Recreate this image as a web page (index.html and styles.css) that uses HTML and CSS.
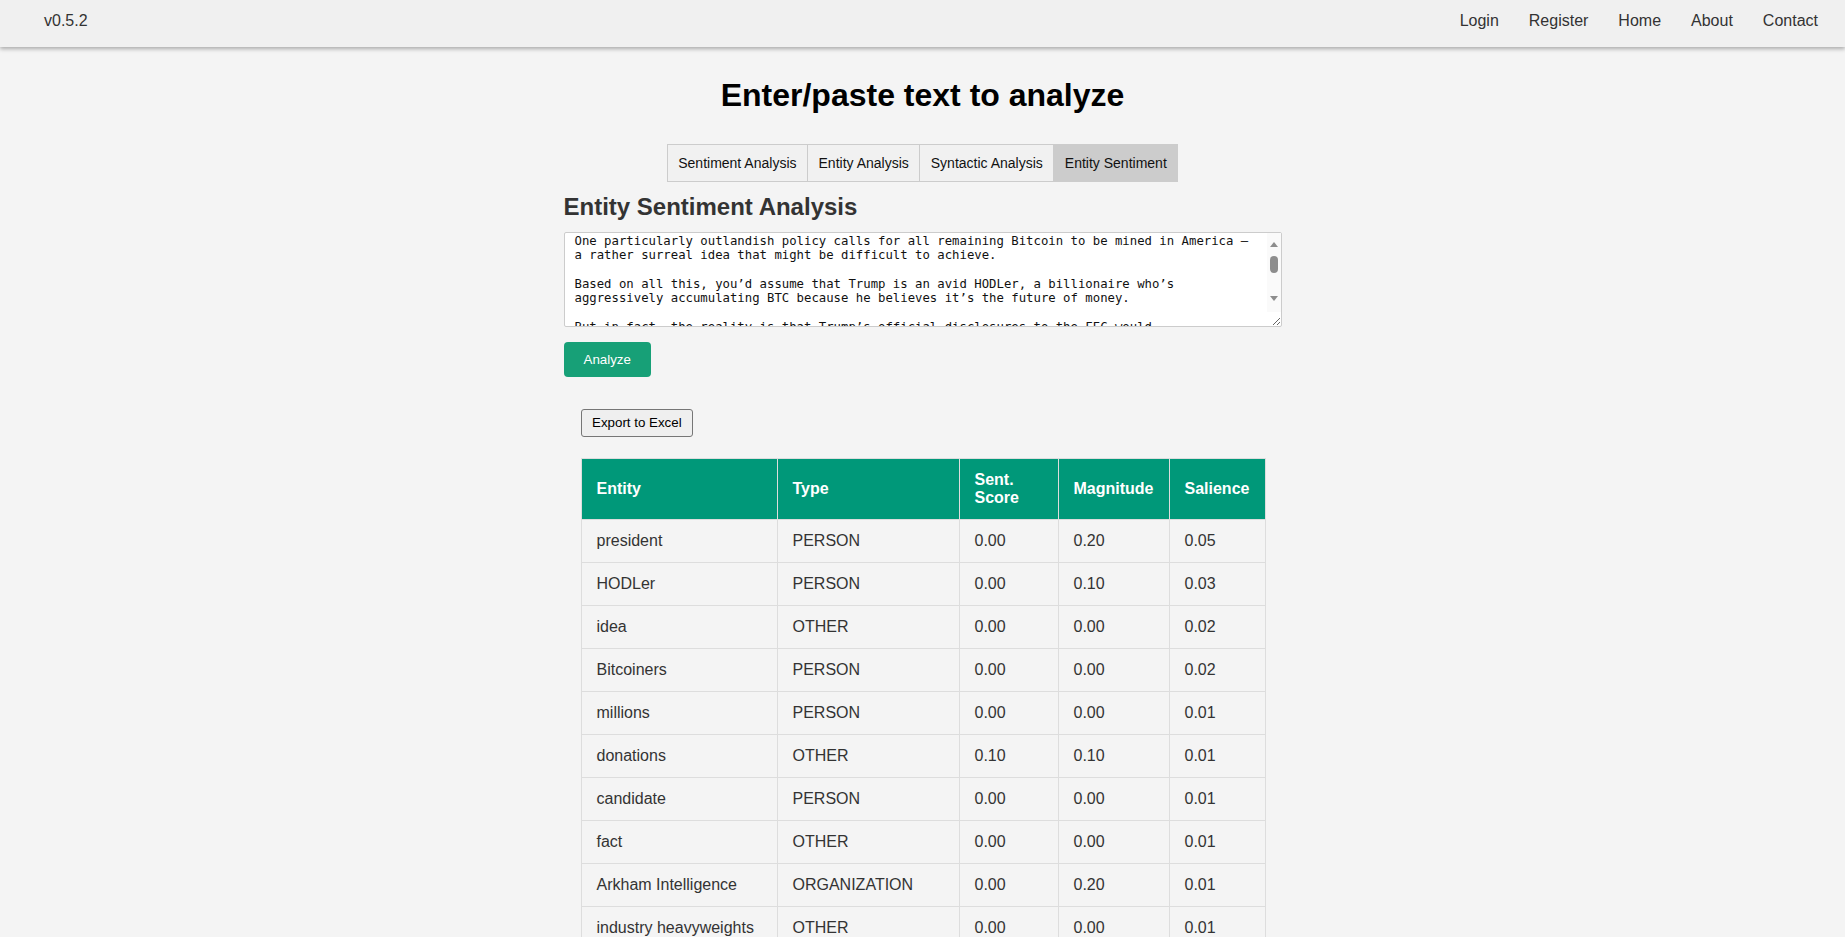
FILE: index.html
```html
<!DOCTYPE html>
<html lang="en">
<head>
<meta charset="utf-8">
<title>Entity Sentiment Analysis</title>
<link rel="stylesheet" href="styles.css">
</head>
<body>
<header class="topbar">
  <span class="version">v0.5.2</span>
  <nav class="nav">
    <a href="#">Login</a>
    <a href="#">Register</a>
    <a href="#">Home</a>
    <a href="#">About</a>
    <a href="#">Contact</a>
  </nav>
</header>
<main class="page">
  <h1 class="title">Enter/paste text to analyze</h1>
  <div class="tabs-row">
    <div class="tabs">
      <button class="tab">Sentiment Analysis</button>
      <button class="tab">Entity Analysis</button>
      <button class="tab">Syntactic Analysis</button>
      <button class="tab active">Entity Sentiment</button>
    </div>
  </div>
  <section class="panel">
    <h2 class="panel-title">Entity Sentiment Analysis</h2>
    <div class="input-wrap">
      <textarea class="input" wrap="off">One particularly outlandish policy calls for all remaining Bitcoin to be mined in America —
a rather surreal idea that might be difficult to achieve.

Based on all this, you’d assume that Trump is an avid HODLer, a billionaire who’s
aggressively accumulating BTC because he believes it’s the future of money.

But in fact, the reality is that Trump’s official disclosures to the FEC would
suggest otherwise: his holdings are modest compared to industry heavyweights.

According to Arkham Intelligence, the candidate holds millions in tokens, most of
them received as donations rather than purchased by the president himself.</textarea>
      <div class="scrollbar" aria-hidden="true">
        <span class="sb-up"></span>
        <span class="sb-thumb"></span>
        <span class="sb-down"></span>
      </div>
    </div>
    <button class="analyze">Analyze</button>
    <div class="results">
      <button class="export">Export to Excel</button>
      <table class="grid">
        <colgroup>
          <col class="c-entity">
          <col class="c-type">
          <col class="c-score">
          <col class="c-mag">
          <col class="c-sal">
        </colgroup>
        <thead>
          <tr><th>Entity</th><th>Type</th><th>Sent.<br>Score</th><th>Magnitude</th><th>Salience</th></tr>
        </thead>
        <tbody>
          <tr><td>president</td><td>PERSON</td><td>0.00</td><td>0.20</td><td>0.05</td></tr>
          <tr><td>HODLer</td><td>PERSON</td><td>0.00</td><td>0.10</td><td>0.03</td></tr>
          <tr><td>idea</td><td>OTHER</td><td>0.00</td><td>0.00</td><td>0.02</td></tr>
          <tr><td>Bitcoiners</td><td>PERSON</td><td>0.00</td><td>0.00</td><td>0.02</td></tr>
          <tr><td>millions</td><td>PERSON</td><td>0.00</td><td>0.00</td><td>0.01</td></tr>
          <tr><td>donations</td><td>OTHER</td><td>0.10</td><td>0.10</td><td>0.01</td></tr>
          <tr><td>candidate</td><td>PERSON</td><td>0.00</td><td>0.00</td><td>0.01</td></tr>
          <tr><td>fact</td><td>OTHER</td><td>0.00</td><td>0.00</td><td>0.01</td></tr>
          <tr><td>Arkham Intelligence</td><td>ORGANIZATION</td><td>0.00</td><td>0.20</td><td>0.01</td></tr>
          <tr><td>industry heavyweights</td><td>OTHER</td><td>0.00</td><td>0.00</td><td>0.01</td></tr>
          <tr><td>policy</td><td>OTHER</td><td>0.00</td><td>0.00</td><td>0.01</td></tr>
          <tr><td>Bitcoin</td><td>OTHER</td><td>0.00</td><td>0.00</td><td>0.01</td></tr>
        </tbody>
      </table>
    </div>
  </section>
</main>
</body>
</html>
```
FILE: styles.css
```css
html, body {
  margin: 0;
  background: #f4f4f4;
  font-family: "Liberation Sans", Arial, sans-serif;
  color: #333;
}

.topbar {
  height: 47px;
  box-sizing: border-box;
  background: #f0f0f0;
  box-shadow: 0 2px 4px rgba(0, 0, 0, 0.3);
  display: flex;
  justify-content: space-between;
  align-items: flex-start;
  padding: 12px 12px 0 44px;
  font-size: 16px;
  line-height: 18px;
  position: relative;
}

.version {
  color: #333;
}

.nav {
  display: flex;
}

.nav a {
  padding: 0 15px;
  color: #333;
  text-decoration: none;
}

.title {
  margin: 29.5px 0 0;
  text-align: center;
  font-size: 32px;
  line-height: 37px;
  font-weight: bold;
  color: #000;
}

.tabs-row {
  display: flex;
  justify-content: center;
  margin-top: 30.5px;
}

.tabs {
  display: flex;
  border: 1px solid #ccc;
  background: #f1f1f1;
}

.tab {
  font-family: "Liberation Sans", Arial, sans-serif;
  font-size: 14px;
  line-height: 16px;
  padding: 10px 10.5px;
  margin: 0;
  border: none;
  border-right: 1px solid #ccc;
  background: transparent;
  color: #111;
}

.tab:last-child {
  border-right: none;
}

.tab.active {
  background: #ccc;
}

.panel {
  width: 718px;
  margin: 11px auto 0;
  display: flex;
  flex-direction: column;
  align-items: flex-start;
  padding-bottom: 40px;
}

.panel-title {
  margin: 0;
  font-size: 24px;
  line-height: 27.6px;
  font-weight: bold;
  color: #333;
}

.input-wrap {
  position: relative;
  align-self: stretch;
  margin-top: 11.4px;
  height: 95px;
}

.input {
  display: block;
  margin: 0;
  width: 100%;
  height: 95px;
  box-sizing: border-box;
  border: 1px solid #ccc;
  border-radius: 2px;
  background: #fff;
  padding: 1px 24px 0 10px;
  font-family: "DejaVu Sans Mono", monospace;
  font-size: 12.3px;
  line-height: 14.3px;
  color: #111;
  resize: vertical;
  overflow: hidden;
}

.scrollbar {
  position: absolute;
  top: 1px;
  right: 1px;
  width: 14px;
  height: 79px;
  background: #fafafa;
  display: flex;
  flex-direction: column;
  align-items: center;
  pointer-events: none;
}

.sb-up {
  margin-top: 9px;
  width: 0;
  height: 0;
  border-left: 4px solid transparent;
  border-right: 4px solid transparent;
  border-bottom: 5px solid #8d8d8d;
}

.sb-thumb {
  margin-top: 8.7px;
  width: 8px;
  height: 17px;
  border-radius: 4px;
  background: #8d8d8d;
}

.sb-down {
  margin-top: auto;
  margin-bottom: 10.5px;
  width: 0;
  height: 0;
  border-left: 4px solid transparent;
  border-right: 4px solid transparent;
  border-top: 5px solid #8d8d8d;
}

.analyze {
  margin-top: 15px;
  background: #17a077;
  color: #fff;
  border: none;
  border-radius: 4px;
  padding: 10px 20px;
  font-family: "Liberation Sans", Arial, sans-serif;
  font-size: 13.333px;
  line-height: 15.33px;
}

.results {
  align-self: stretch;
  padding: 0 17px;
  margin-top: 31.7px;
}

.export {
  display: block;
  box-sizing: border-box;
  height: 28px;
  padding: 5px 10.5px;
  font-family: "Liberation Sans", Arial, sans-serif;
  font-size: 13.333px;
  line-height: 16px;
  border: 1px solid #767676;
  border-radius: 3px;
  background: #efefef;
  color: #000;
}

.grid {
  margin-top: 21px;
  width: 100%;
  border-collapse: collapse;
  table-layout: fixed;
  font-size: 16px;
  line-height: 18px;
}

.c-entity { width: 196px; }
.c-type { width: 182px; }
.c-score { width: 99px; }
.c-mag { width: 111px; }
.c-sal { width: 96px; }

.grid th,
.grid td {
  padding: 12px 15px;
  border: 1px solid #ddd;
  text-align: left;
  white-space: nowrap;
}

.grid th {
  background: #009879;
  color: #fff;
  font-weight: bold;
}

.grid td {
  color: #333;
}
```
